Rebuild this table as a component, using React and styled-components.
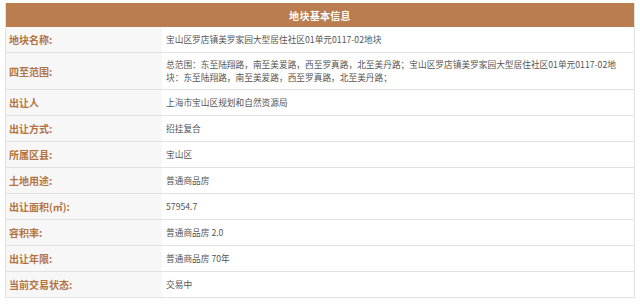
import styled, { createGlobalStyle } from "styled-components"

const GlobalStyle = createGlobalStyle`
    body {
        margin: 0;
        background: #fff;
        font-family: "Noto Sans CJK SC", "Noto Sans", sans-serif;
    }
`

const Page = styled.div`
    padding: 3px 5px 0 5px;
`

const InfoTable = styled.div`
    width: 630px;
    border: 1px solid #e2e2e2;
    border-top: none;
    box-sizing: border-box;
`

const Header = styled.div`
    height: 24px;
    background-color: #b97d4f;
    color: #fff;
    font-size: 10px;
    font-weight: 700;
    display: flex;
    align-items: center;
    justify-content: center;
    letter-spacing: 0.3px;
`

const Row = styled.div`
    display: grid;
    grid-template-columns: 156px 1fr;
    min-height: 25px;
    border-bottom: 1px solid #e2e2e2;

    &:last-child {
        border-bottom: none;
    }
`

const Label = styled.div`
    background-color: #f7f7f7;
    color: #b3733f;
    font-size: 10px;
    font-weight: 700;
    display: flex;
    align-items: center;
    padding-left: 3px;
`

const Value = styled.div`
    color: #555;
    font-size: 8.7px;
    line-height: 13px;
    display: flex;
    align-items: center;
    padding: ${({ $multi }) => ($multi ? "5px 16px 5px 4px" : "0 16px 0 4px")};
`

const rows = [
    ["地块名称:", "宝山区罗店镇美罗家园大型居住社区01单元0117-02地块"],
    ["四至范围:", "总范围：东至陆翔路，南至美爱路，西至罗真路，北至美丹路；宝山区罗店镇美罗家园大型居住社区01单元0117-02地块：东至陆翔路，南至美爱路，西至罗真路，北至美丹路；", true],
    ["出让人", "上海市宝山区规划和自然资源局"],
    ["出让方式:", "招挂复合"],
    ["所属区县:", "宝山区"],
    ["土地用途:", "普通商品房"],
    ["出让面积(㎡):", "57954.7"],
    ["容积率:", "普通商品房 2.0"],
    ["出让年限:", "普通商品房 70年"],
    ["当前交易状态:", "交易中"],
]

export default function App() {
    return (
        <>
            <GlobalStyle />
            <Page>
                <InfoTable>
                    <Header>地块基本信息</Header>
                    {rows.map(([label, value, multi]) => (
                        <Row key={label}>
                            <Label>{label}</Label>
                            <Value $multi={multi}>{value}</Value>
                        </Row>
                    ))}
                </InfoTable>
            </Page>
        </>
    )
}
